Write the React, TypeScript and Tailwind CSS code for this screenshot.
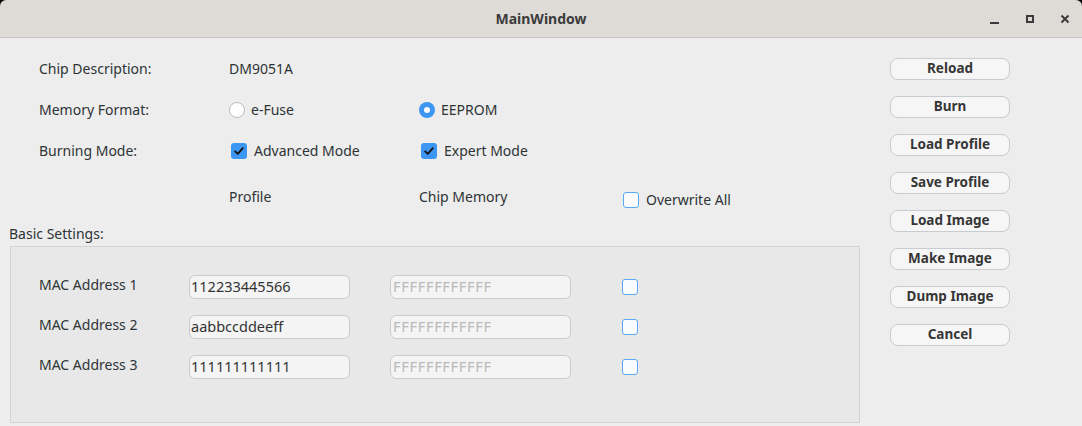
import React from 'react'

const Radio = ({ checked }: { checked?: boolean }) =>
  checked ? (
    <span className="w-4 h-4 rounded-full bg-[#3d97f2] flex items-center justify-center">
      <span className="w-[6px] h-[6px] rounded-full bg-white" />
    </span>
  ) : (
    <span className="w-4 h-4 rounded-full bg-white border border-[#b9bcc0]" />
  )

const Check = ({ checked }: { checked?: boolean }) =>
  checked ? (
    <span className="w-4 h-4 rounded-[3px] bg-[#3d97f2] flex items-center justify-center">
      <svg width="12" height="12" viewBox="0 0 12 12" fill="none">
        <path d="M2.2 6.3 L4.8 8.8 L9.8 3.2" stroke="#111" strokeWidth="1.8" strokeLinecap="round" strokeLinejoin="round" />
      </svg>
    </span>
  ) : (
    <span className="w-4 h-4 rounded-[3px] bg-[#fbfcfd] border border-[#5aa7f5]" />
  )

const buttons = ['Reload', 'Burn', 'Load Profile', 'Save Profile', 'Load Image', 'Make Image', 'Dump Image', 'Cancel']

const macs = [
  { label: 'MAC Address 1', value: '112233445566' },
  { label: 'MAC Address 2', value: 'aabbccddeeff' },
  { label: 'MAC Address 3', value: '111111111111' },
]

const App: React.FC = () => {
  return (
    <div className="w-[1082px] h-[426px] bg-black overflow-hidden text-[14px] text-[#2e3436]" style={{ fontFamily: '"Noto Sans", sans-serif' }}>
      {/* Title bar */}
      <div className="h-[38px] rounded-t-[6px] bg-[#dedbd7] border-b border-[#c9c6c2] flex items-center relative">
        <div className="flex-1 text-center font-bold text-[14px] text-[#3b3b3b]">MainWindow</div>
        <div className="absolute right-0 top-0 h-full flex items-center">
          <div className="w-[35px] flex justify-center"><span className="w-[9px] h-[2px] bg-[#3b3b3b] mt-[8px]" /></div>
          <div className="w-[35px] flex justify-center"><span className="w-[8px] h-[8px] border-2 border-[#3b3b3b]" /></div>
          <div className="w-[35px] flex justify-center">
            <svg width="10" height="10" viewBox="0 0 10 10"><path d="M1.5 1.5 L8.5 8.5 M8.5 1.5 L1.5 8.5" stroke="#3b3b3b" strokeWidth="2" /></svg>
          </div>
        </div>
      </div>

      <div className="h-[388px] bg-[#ededed] flex">
        {/* Left content */}
        <div className="w-[880px] flex flex-col">
          <div className="pl-[39px] pt-[10px] grid grid-cols-[190px_190px_202px_1fr]">
            <div className="h-[41px] flex items-center">Chip Description:</div>
            <div className="h-[41px] flex items-center col-span-3">DM9051A</div>

            <div className="h-[41px] flex items-center">Memory Format:</div>
            <div className="h-[41px] flex items-center gap-[6px]"><Radio />e-Fuse</div>
            <div className="h-[41px] flex items-center gap-[6px] col-span-2"><Radio checked />EEPROM</div>

            <div className="h-[41px] flex items-center">Burning Mode:</div>
            <div className="h-[41px] flex items-center gap-[7px] pl-[2px]"><Check checked />Advanced Mode</div>
            <div className="h-[41px] flex items-center gap-[7px] pl-[2px] col-span-2"><Check checked />Expert Mode</div>

            <div className="h-[50px]" />
            <div className="h-[50px] flex items-center pt-[1px]">Profile</div>
            <div className="h-[50px] flex items-center pt-[1px]">Chip Memory</div>
            <div className="h-[50px] flex items-center gap-[7px] pl-[2px] pt-[7px]"><Check />Overwrite All</div>
          </div>

          <div className="pl-[9px] h-[25px] flex items-center">Basic Settings:</div>

          <div className="ml-[10px] w-[850px] h-[177px] bg-[#e8e8e8] border border-[#d4d4d4] pt-[20px] flex flex-col">
            {macs.map((m) => (
              <div key={m.label} className="h-[40px] flex items-center">
                <div className="w-[178px] pl-[28px] -mt-[6px]">{m.label}</div>
                <div className="w-[161px] h-[24px] rounded-[6px] bg-[#f4f4f4] border-[1.5px] border-[#c8ccd0] flex items-center pl-[1px] text-[14.5px] text-[#333]">{m.value}</div>
                <div className="w-[40px]" />
                <div className="w-[181px] h-[24px] rounded-[6px] bg-[#f4f4f4] border-[1.5px] border-[#c8ccd0] flex items-center pl-[2px] text-[14.5px] tracking-[0.7px] text-[#b9b9b9]">FFFFFFFFFFFF</div>
                <div className="w-[51px]" />
                <Check />
              </div>
            ))}
          </div>
        </div>

        {/* Right buttons */}
        <div className="pl-[10px] pt-[20px] flex flex-col gap-[16px]">
          {buttons.map((b) => (
            <button key={b} className="w-[120px] h-[22px] rounded-[8px] bg-[#f6f6f6] border-[1.5px] border-[#c8ccd0] font-bold text-[13.5px] text-[#363636] flex items-center justify-center leading-none">
              {b}
            </button>
          ))}
        </div>
      </div>
    </div>
  )
}

export default App
